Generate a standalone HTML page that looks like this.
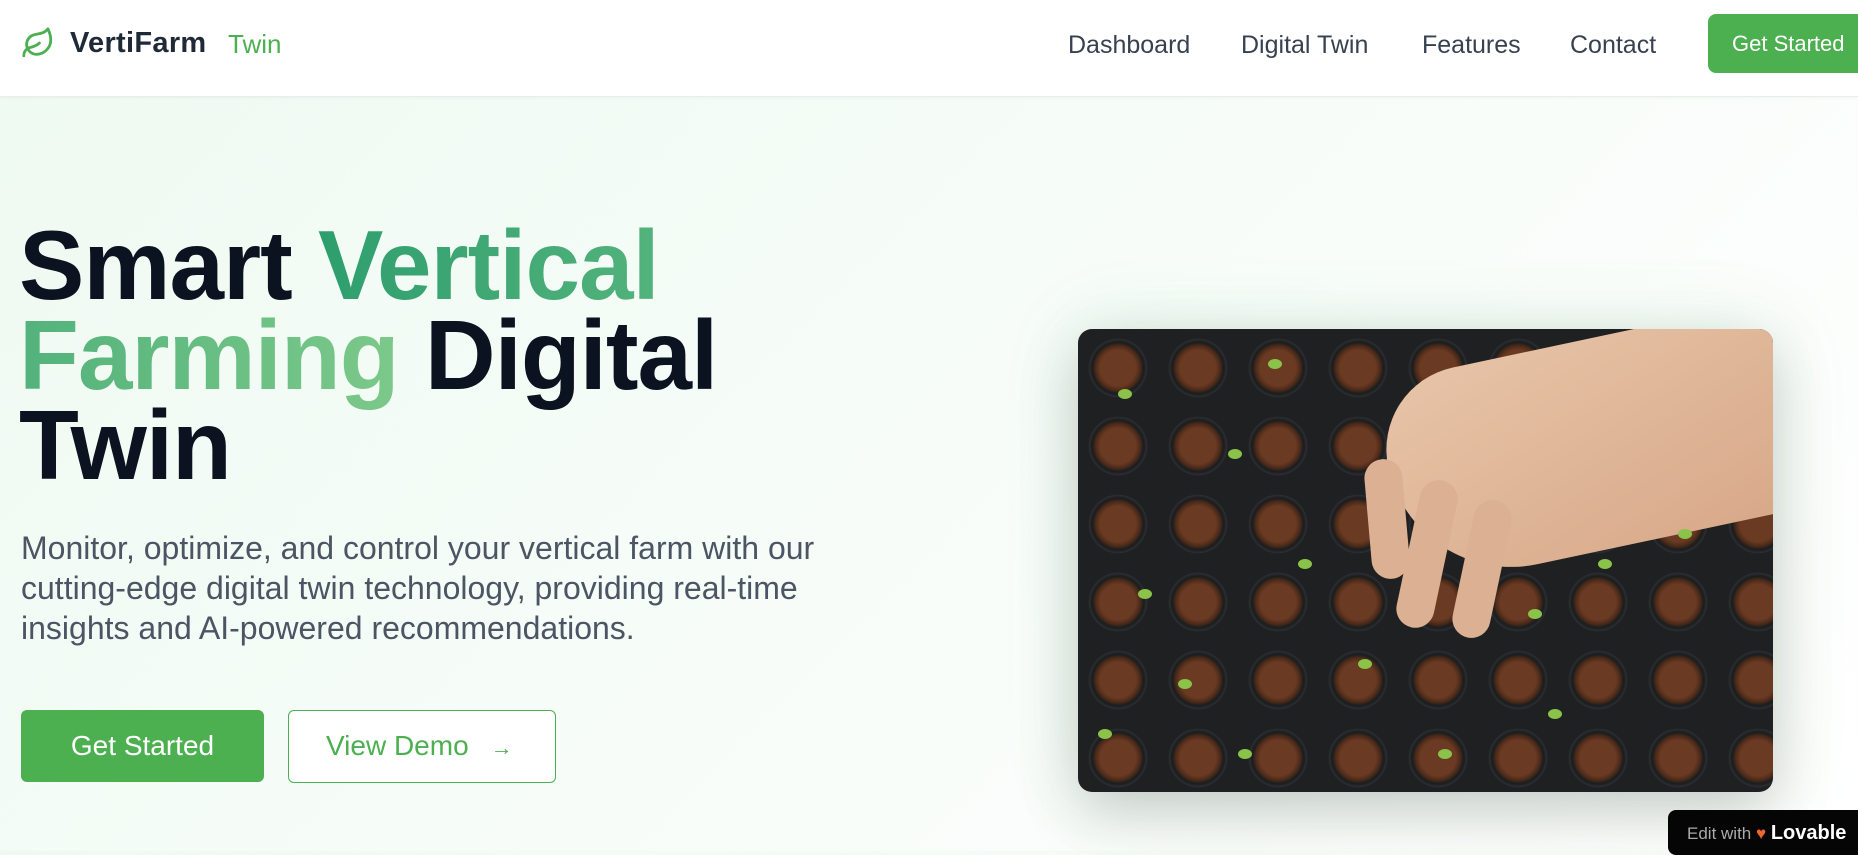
<!DOCTYPE html>
<html><head><meta charset="utf-8">
<style>
*{margin:0;padding:0;box-sizing:border-box}
body{width:1858px;height:851px;overflow:hidden;font-family:"Liberation Sans",sans-serif;background:linear-gradient(135deg,#eefaf1 0%,#f6fcf8 45%,#ffffff 100%);position:relative}
header{position:absolute;left:0;top:0;width:1858px;height:97px;background:#fff;border-bottom:1px solid #e8eeea;box-shadow:0 1px 3px rgba(0,0,0,.04)}
.logo{position:absolute;left:21px;top:26px;display:flex;align-items:center}
.brand{position:absolute;left:70px;top:27px;font-size:29px;font-weight:bold;color:#1f2937;letter-spacing:.3px}
.twin{position:absolute;left:228px;top:29px;font-size:26px;color:#4caf50}
.nav{position:absolute;top:31px;font-size:25px;color:#374151}
.btn-top{position:absolute;left:1708px;top:14px;width:170px;height:59px;background:#4caf50;border-radius:8px;color:#fff;font-size:22px;line-height:59px;padding-left:24px}
h1{position:absolute;left:19px;top:220px;font-size:98px;line-height:90px;font-weight:bold;color:#0b1220;letter-spacing:-1px}
.g{background:linear-gradient(90deg,#2e9e6e,#7cc98a);-webkit-background-clip:text;background-clip:text;color:transparent}
p.lead{position:absolute;left:21px;top:528px;width:840px;font-size:32px;line-height:40px;color:#4b5563}
.b1{position:absolute;left:21px;top:710px;width:243px;height:72px;background:#4caf50;border-radius:6px;color:#fff;font-size:28px;line-height:72px;text-align:center}
.b2{position:absolute;left:288px;top:710px;width:268px;height:73px;border:1.5px solid #4caf50;border-radius:6px;color:#4caf50;font-size:28px;line-height:70px;padding-left:37px;background:#fff}
.b2 span{font-size:22px;margin-left:22px}
.img{position:absolute;left:1078px;top:329px;width:695px;height:463px;border-radius:14px;overflow:hidden;box-shadow:0 20px 60px rgba(0,0,0,.18),0 0 80px rgba(76,175,80,.12);
background:
radial-gradient(circle at 50% 50%, #6b3a22 0 32%, #4a2a1a 40%, #1a1c1e 46%, #2c2f31 52%, transparent 53%) 0 0/80px 78px,
#1e2022;}
.hand{position:absolute;left:310px;top:10px;width:420px;height:210px;background:linear-gradient(160deg,#e8c4a8,#d7a888);border-radius:120px 40px 60px 180px;transform:rotate(-12deg)}
.f1{position:absolute;width:38px;height:150px;background:#dcb092;border-radius:20px;transform:rotate(12deg)}
.sp{position:absolute;width:14px;height:10px;background:#8bc34a;border-radius:50%}
.badge{position:absolute;left:1668px;top:810px;width:200px;height:45px;background:#050505;border-radius:8px;color:#aaa;font-size:17px;padding:12px 0 0 19px}
.badge b{color:#fff;font-size:20px}
</style></head><body>
<header>
<div class="logo"><svg width="34" height="34" viewBox="0 0 24 24" fill="none" stroke="#4caf50" stroke-width="2" stroke-linecap="round" stroke-linejoin="round"><path d="M11 20A7 7 0 0 1 9.8 6.1C15.5 5 17 4.48 19 2c1 2 2 4.18 2 8 0 5.5-4.780 10-10 10Z"/><path d="M2 21c0-3 1.85-5.36 5.08-6C9.5 14.52 12 13 13 12"/></svg></div>
<div class="brand">VertiFarm</div><div class="twin">Twin</div>
<div class="nav" style="left:1068px">Dashboard</div>
<div class="nav" style="left:1241px">Digital Twin</div>
<div class="nav" style="left:1422px">Features</div>
<div class="nav" style="left:1570px">Contact</div>
<div class="btn-top">Get Started</div>
</header>
<h1>Smart <span class="g">Vertical<br>Farming</span> Digital<br>Twin</h1>
<p class="lead">Monitor, optimize, and control your vertical farm with our cutting-edge digital twin technology, providing real-time insights and AI-powered recommendations.</p>
<div class="b1">Get Started</div>
<div class="b2">View Demo<span>→</span></div>
<div class="img">
<div class="hand"></div>
<div class="f1" style="left:330px;top:150px"></div>
<div class="f1" style="left:385px;top:170px;height:140px"></div>
<div class="f1" style="left:290px;top:130px;height:120px;transform:rotate(-5deg)"></div>
<div class="sp" style="left:40px;top:60px"></div><div class="sp" style="left:190px;top:30px"></div>
<div class="sp" style="left:150px;top:120px"></div><div class="sp" style="left:60px;top:260px"></div>
<div class="sp" style="left:220px;top:230px"></div><div class="sp" style="left:100px;top:350px"></div>
<div class="sp" style="left:280px;top:330px"></div><div class="sp" style="left:450px;top:280px"></div>
<div class="sp" style="left:520px;top:230px"></div><div class="sp" style="left:600px;top:200px"></div>
<div class="sp" style="left:470px;top:380px"></div><div class="sp" style="left:360px;top:420px"></div>
<div class="sp" style="left:20px;top:400px"></div><div class="sp" style="left:160px;top:420px"></div>
</div>
<div class="badge">Edit with <span style="color:#f0642f">♥</span> <b>Lovable</b></div>
</body></html>
